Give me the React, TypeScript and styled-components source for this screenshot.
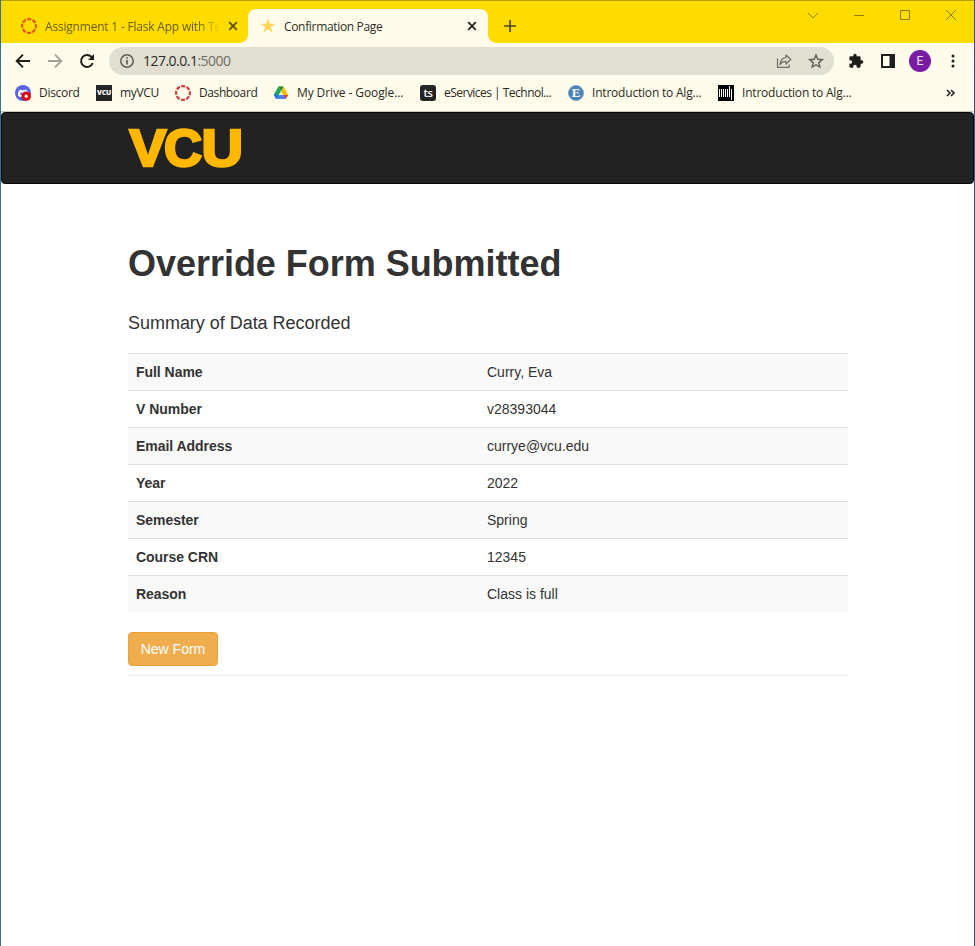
import React from "react";
import styled, { createGlobalStyle } from "styled-components";

const GlobalStyle = createGlobalStyle`
  *, *::before, *::after { box-sizing: border-box; }
  html, body { margin: 0; padding: 0; background: #fff; }
  body { overflow: hidden; }
  svg { display: block; flex: none; overflow: visible; }
`;

const Window = styled.div`
  width: 975px;
  height: 946px;
  display: flex;
  flex-direction: column;
  border-left: 1px solid #2f7396;
  border-right: 1px solid #2b5797;
  background: #fff;
  font-family: "Open Sans", "Noto Sans", sans-serif;
  font-size: 12px;
  color: #2b2a22;
`;

const TabStrip = styled.div`
  height: 43px;
  flex: none;
  display: flex;
  align-items: flex-end;
  background: #ffdc00;
  border-top: 1px solid #b89f00;
`;

const Tab = styled.div<{ $active?: boolean; $width: number }>`
  position: relative;
  display: flex;
  align-items: center;
  width: ${(p) => p.$width}px;
  height: 34px;
  padding: ${(p) => (p.$active ? "0 11px 0 12px" : "0 10px 0 20px")};
  border-radius: 8px 8px 0 0;
  background: ${(p) => (p.$active ? "#fffcec" : "transparent")};
  color: ${(p) => (p.$active ? "#2e2c24" : "#6a5d0a")};
  &::before, &::after {
    content: "";
    display: ${(p) => (p.$active ? "block" : "none")};
    position: absolute;
    bottom: 0;
    width: 8px;
    height: 8px;
  }
  &::before { left: -8px; background: radial-gradient(circle at 0 0, transparent 7.5px, #fffcec 8px); }
  &::after { right: -8px; background: radial-gradient(circle at 100% 0, transparent 7.5px, #fffcec 8px); }
`;

const TabTitle = styled.span<{ $faded?: boolean; $spacing: number }>`
  flex: 1;
  margin: 1px 9px 0 8px;
  overflow: hidden;
  white-space: nowrap;
  line-height: 18px;
  letter-spacing: ${(p) => p.$spacing}px;
  ${(p) => p.$faded && "mask-image: linear-gradient(90deg, #000 88%, transparent 101%);"}
`;

const NewTab = styled.div`
  display: flex;
  align-items: center;
  height: 34px;
  padding-left: 16px;
`;

const WindowButtons = styled.div`
  display: flex;
  align-self: flex-start;
  gap: 34px;
  margin: 8px 17px 0 auto;
`;

const Toolbar = styled.div`
  height: 36px;
  flex: none;
  display: flex;
  align-items: center;
  padding: 0 13px 0 14px;
  background: #fffcec;
`;

const NavButtons = styled.div`
  display: flex;
  gap: 16px;
  margin-right: 14px;
`;

const AddressBar = styled.div`
  display: flex;
  align-items: center;
  width: 725px;
  height: 28px;
  padding: 0 10px;
  border-radius: 14px;
  background: #e1dfd2;
`;

const Address = styled.span`
  flex: 1;
  margin-left: 8px;
  font-size: 14px;
  letter-spacing: -0.52px;
  line-height: 20px;
  color: #2b2a25;
  span { color: #6f6d65; }
`;

const AddressActions = styled.div`
  display: flex;
  gap: 16px;
`;

const ToolbarActions = styled.div`
  display: flex;
  align-items: center;
  margin-left: 14px;
`;

const Avatar = styled.div`
  width: 22px;
  height: 22px;
  margin: 0 20px 0 14px;
  border-radius: 50%;
  background: #7a1ba3;
  color: #f3e3f8;
  font: 12px/22px Roboto, sans-serif;
  text-align: center;
`;

const BookmarkBar = styled.div`
  height: 33px;
  flex: none;
  display: flex;
  align-items: center;
  padding: 0 19px 4px 14px;
  background: #fffcec;
  border-bottom: 1px solid #c9c7bb;
  & > svg { margin-left: auto; }
`;

const Bookmark = styled.div<{ $width: number; $spacing: number }>`
  display: flex;
  align-items: center;
  gap: 8px;
  width: ${(p) => p.$width}px;
  white-space: nowrap;
  line-height: 18px;
  letter-spacing: ${(p) => p.$spacing}px;
`;

const Badge = styled.span<{ $radius: number; $size: number; $weight: number }>`
  width: 16px;
  height: 16px;
  flex: none;
  border-radius: ${(p) => p.$radius}px;
  background: #242424;
  color: #fff;
  font-size: ${(p) => p.$size}px;
  font-weight: ${(p) => p.$weight};
  letter-spacing: -0.3px;
  line-height: 15px;
  text-align: center;
`;

const Navbar = styled.header`
  height: 72px;
  flex: none;
  padding: 14px 126px;
  border: 1px solid #080808;
  border-radius: 4px;
  background: #222;
`;

const Page = styled.main`
  width: 720px;
  margin-left: 127px;
  font-family: "Liberation Sans", Arial, sans-serif;
  font-size: 14px;
  line-height: 20px;
  color: #333;
`;

const Heading = styled.h1`
  margin: 60px 0 0;
  font-size: 36px;
  line-height: 40px;
  font-weight: 700;
  letter-spacing: -0.03px;
`;

const Subheading = styled.h4`
  margin: 29px 0 20px;
  font-size: 18px;
  line-height: 20px;
  font-weight: 400;
  letter-spacing: -0.03px;
`;

const Summary = styled.dl`
  margin: 0 0 20px;
`;

const SummaryRow = styled.div`
  display: grid;
  grid-template-columns: 351px 1fr;
  height: 37px;
  border-top: 1px solid #ddd;
  &:nth-child(odd) { background: #f9f9f9; }
  dt, dd { margin: 0; padding: 8px; }
  dt { font-weight: 700; letter-spacing: -0.04px; }
`;

const Button = styled.button`
  display: block;
  width: 90px;
  height: 34px;
  padding: 0;
  border: 1px solid #eea236;
  border-radius: 4px;
  background: #f0ad4e;
  color: #fff;
  font: inherit;
`;

const Divider = styled.hr`
  margin: 9px 0 0;
  border: 0;
  border-top: 1px solid #eee;
`;

const CanvasIcon = ({ color }: { color: string }) => (
  <svg width="16" height="16" viewBox="0 0 16 16" fill="none">
    <circle cx="8" cy="8" r="6.9" stroke={color} strokeWidth="2.2" strokeDasharray="4.1 1.32" strokeDashoffset="2" />
  </svg>
);

const CloseIcon = ({ color }: { color: string }) => (
  <svg width="10" height="10" viewBox="0 0 10 10" stroke={color} strokeWidth="1.8">
    <path d="M1.2 1.2l7.6 7.6M8.800 1.200l-7.600 7.600" />
  </svg>
);

const WindowIcon = ({ d }: { d: string }) => (
  <svg width="12" height="13" viewBox="0 0 12 13" fill="none" stroke="#8f7b00" strokeWidth="1">
    <path d={d} />
  </svg>
);

const DiscordIcon = () => (
  <svg width="16" height="16" viewBox="0 0 16 16">
    <circle cx="8" cy="8" r="8" fill="#5865e8" />
    <path d="M3 10.8C2.6 7.5 3.6 5 5.5 4.4l.7.8h3.6l.7-.8c1.8.6 2.8 2.5 2.7 5L11 12H5z" fill="#fff" />
    <circle cx="6.5" cy="8.7" r="1.2" fill="#5865e8" />
    <circle cx="11.2" cy="11.2" r="4.8" fill="#d90a12" />
    <circle cx="11.2" cy="11.2" r="1.6" fill="#fff" />
  </svg>
);

const DriveIcon = () => (
  <svg width="16" height="16" viewBox="0 0 16 16">
    <path d="M5.5 1.5L.8 9.7l2.5 4.2L8 6z" fill="#16a765" />
    <path d="M5.5 1.5h5L15.2 10h-5z" fill="#fbbc04" />
    <path d="M3.3 14L5.7 10h9.5L12.7 14z" fill="#4285f4" />
    <path d="M5.5 1.5h5L8 6z" fill="#148b3d" />
    <path d="M10.2 10h5l-2.4 4z" fill="#ea4335" />
    <path d="M.8 9.8h4.9L3.3 14z" fill="#2069d4" />
  </svg>
);

const Letter = styled.text`
  font-family: "Liberation Serif", serif;
  font-size: 13px;
  font-weight: 700;
  fill: #fff;
`;

const EncyclopediaIcon = () => (
  <svg width="16" height="16" viewBox="0 0 16 16">
    <circle cx="8" cy="8" r="7.6" fill="#4b82b7" stroke="#7aa4c8" strokeWidth=".8" />
    <Letter x="8" y="12.3" textAnchor="middle">E</Letter>
  </svg>
);

const PressIcon = () => (
  <svg width="16" height="16" viewBox="0 0 16 16">
    <path fill="#000" d="M0 0h16v16H0z" />
    <path d="M1.5 4v8M3.5 4v8M5.5 4v8M7.5 4v8M9.5 4v8M11.5 1v11M13.5 4v11" stroke="#fff" />
  </svg>
);

const LogoLetter = styled.text`
  font-family: "Liberation Sans", Arial, sans-serif;
  font-size: 52px;
  font-weight: 700;
  fill: #ffb700;
  stroke: #ffb700;
  stroke-width: 2.6px;
`;

const VcuLogo = () => (
  <svg width="114" height="42" viewBox="0 0 114 42" aria-label="VCU">
    <LogoLetter x="1.4" y="38.7" textLength="36.8" lengthAdjust="spacingAndGlyphs">V</LogoLetter>
    <LogoLetter x="36" y="38.7" textLength="38" lengthAdjust="spacingAndGlyphs">C</LogoLetter>
    <LogoLetter x="73.400" y="38.7" textLength="41.600" lengthAdjust="spacingAndGlyphs">U</LogoLetter>
  </svg>
);

const rows: [string, string][] = [
  ["Full Name", "Curry, Eva"],
  ["V Number", "v28393044"],
  ["Email Address", "currye@vcu.edu"],
  ["Year", "2022"],
  ["Semester", "Spring"],
  ["Course CRN", "12345"],
  ["Reason", "Class is full"],
];

const bookmarks = [
  { label: "Discord", width: 81, spacing: -0.3, icon: <DiscordIcon /> },
  { label: "myVCU", width: 79, spacing: -0.35, icon: <Badge $radius={0} $size={7} $weight={800}>VCU</Badge> },
  { label: "Dashboard", width: 98, spacing: -0.4, icon: <CanvasIcon color="#d0403a" /> },
  { label: "My Drive - Google...", width: 147, spacing: -0.1, icon: <DriveIcon /> },
  { label: "eServices | Technol...", width: 148, spacing: -0.52, icon: <Badge $radius={3} $size={11} $weight={600}>ts</Badge> },
  { label: "Introduction to Alg...", width: 150, spacing: -0.2, icon: <EncyclopediaIcon /> },
  { label: "Introduction to Alg...", width: 150, spacing: -0.2, icon: <PressIcon /> },
];

export default function App() {
  return (
    <>
      <GlobalStyle />
      <Window>
        <TabStrip>
          <Tab $width={247}>
            <CanvasIcon color="#e2580a" />
            <TabTitle $faded $spacing={-0.2}>Assignment 1 - Flask App with Tem</TabTitle>
            <CloseIcon color="#5b5008" />
          </Tab>
          <Tab $active $width={240}>
            <svg width="16" height="16" viewBox="0 0 16 16">
              <path fill="#fbd85a" d="M8 .6l1.8 5.2h5.6L10.9 9.1l1.7 5.5L8 11.3l-4.6 3.3 1.7-5.5L.6 5.8h5.600z" />
            </svg>
            <TabTitle $spacing={-0.33}>Confirmation Page</TabTitle>
            <CloseIcon color="#222" />
          </Tab>
          <NewTab>
            <svg width="12" height="12" viewBox="0 0 12 12" stroke="#51470a" strokeWidth="1.7">
              <path d="M6 0v12M0 6h12" />
            </svg>
          </NewTab>
          <WindowButtons>
            <WindowIcon d="M1 4l5 5 5-5" />
            <WindowIcon d="M1 6.5h10" />
            <WindowIcon d="M1.5 1.5h9v9h-9z" />
            <WindowIcon d="M1 1l10 10M11 1L1 11" />
          </WindowButtons>
        </TabStrip>
        <Toolbar>
          <NavButtons>
            <svg width="16" height="16" viewBox="0 0 16 16" fill="none" stroke="#1f1f1c" strokeWidth="1.9"><path d="M15 8H2.5M8 1.7L1.7 8 8 14.3" /></svg>
            <svg width="16" height="16" viewBox="0 0 16 16" fill="none" stroke="#a3a197" strokeWidth="1.9"><path d="M1 8h12.5M8 1.7L14.3 8 8 14.3" /></svg>
            <svg width="16" height="16" viewBox="0 0 16 16" fill="none" stroke="#1f1f1c" strokeWidth="2"><path d="M13.7 10A6 6 0 1 1 12.4 3.8L14 5.4" /><path d="M15 1v6H9z" fill="#1f1f1c" stroke="none" /></svg>
          </NavButtons>
          <AddressBar>
            <svg width="16" height="16" viewBox="0 0 16 16" fill="none" stroke="#5e5d57" strokeWidth="1.5"><circle cx="8" cy="8" r="6.2" /><path d="M8 7v4.5M8 4.2v1.6" strokeWidth="1.7" /></svg>
            <Address>127.0.0.1<span>:5000</span></Address>
            <AddressActions>
              <svg width="16" height="16" viewBox="0 0 16 16" fill="none" stroke="#6d6b63" strokeWidth="1.2"><path d="M1.5 5.5v8.9h11.7v-3" /><path d="M10 2l4.8 4.5L10 11V8.3C7 8.3 5.3 9.3 4 11.5 4.3 7.5 6.5 5 10 4.5z" strokeLinejoin="round" /></svg>
              <svg width="16" height="16" viewBox="0 0 16 16" fill="none" stroke="#5e5d57" strokeWidth="1.4"><path d="M8 2l1.7 4.3 4.6.3-3.5 3 1.1 4.5L8 11.7l-3.9 2.4 1.1-4.5-3.5-3 4.6-.3z" /></svg>
            </AddressActions>
          </AddressBar>
          <ToolbarActions>
            <svg width="16" height="16" viewBox="0 0 24 24" fill="#1f1f1c"><path d="M20.5 11H19V7a2 2 0 0 0-2-2h-4V3.5a2.5 2.5 0 0 0-5 0V5H4a2 2 0 0 0-2 2v3.8h1.5a2.7 2.7 0 0 1 0 5.4H2V20a2 2 0 0 0 2 2h3.8v-1.5a2.7 2.7 0 0 1 5.4 0V22H17a2 2 0 0 0 2-2v-4h1.5a2.5 2.5 0 0 0 0-5z" /></svg>
            <svg width="31" height="14" viewBox="0 0 31 14"><path fill="#1f1f1c" fillRule="evenodd" d="M17 0h14v14H17zM19 2v10h6.500V2z" /></svg>
            <Avatar>E</Avatar>
            <svg width="4" height="14" viewBox="0 0 4 14" fill="#1f1f1c"><circle cx="2" cy="2" r="1.5" /><circle cx="2" cy="7" r="1.5" /><circle cx="2" cy="12" r="1.5" /></svg>
          </ToolbarActions>
        </Toolbar>
        <BookmarkBar>
          {bookmarks.map((b, i) => (
            <Bookmark key={i} $width={b.width} $spacing={b.spacing}>{b.icon}<span>{b.label}</span></Bookmark>
          ))}
          <svg width="9" height="8" viewBox="0 0 9 8" fill="none" stroke="#222" strokeWidth="1.6"><path d="M1 1l3 3-3 3M5 1l3 3-3 3" /></svg>
        </BookmarkBar>
        <Navbar><VcuLogo /></Navbar>
        <Page>
          <Heading>Override Form Submitted</Heading>
          <Subheading>Summary of Data Recorded</Subheading>
          <Summary>
            {rows.map(([label, value]) => (
              <SummaryRow key={label}><dt>{label}</dt><dd>{value}</dd></SummaryRow>
            ))}
          </Summary>
          <Button>New Form</Button>
          <Divider />
        </Page>
      </Window>
    </>
  );
}
